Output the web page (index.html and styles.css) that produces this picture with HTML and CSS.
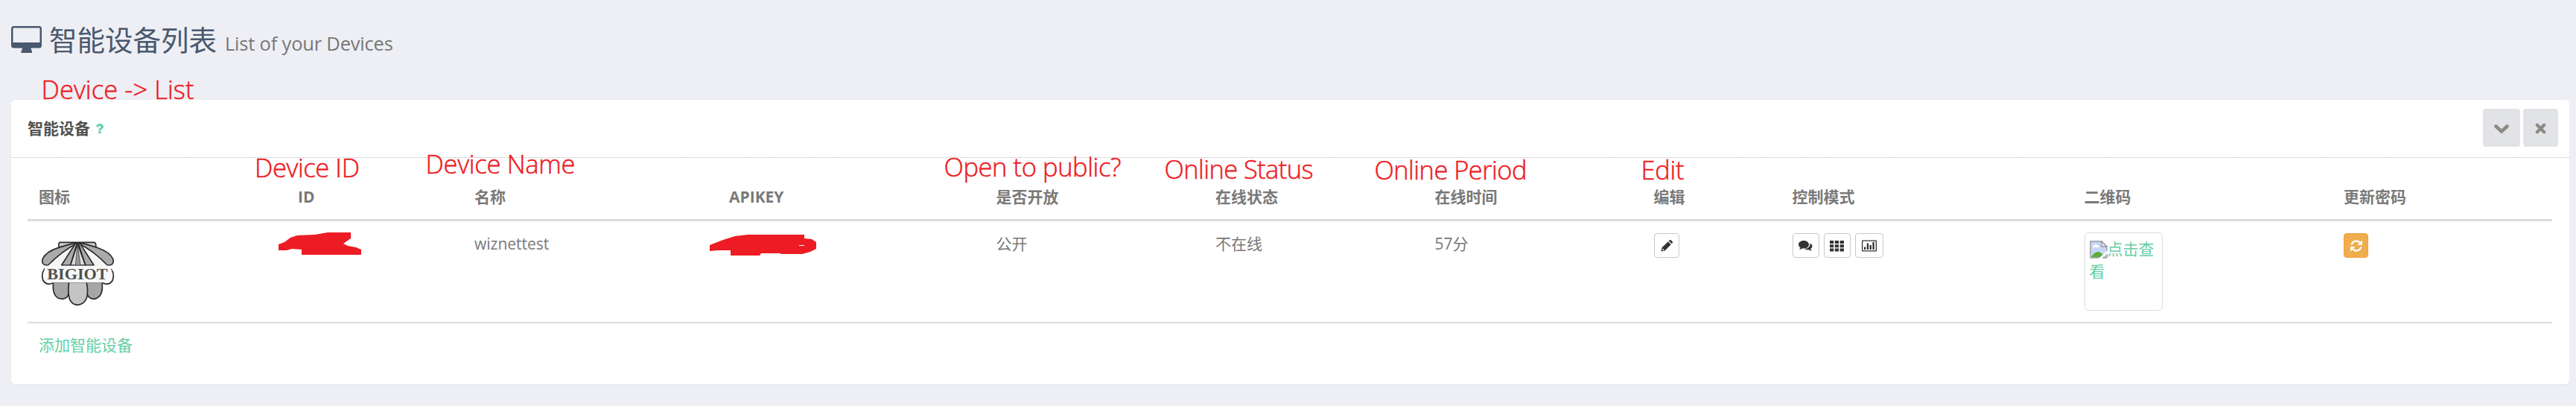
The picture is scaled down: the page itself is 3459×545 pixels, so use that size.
FILE: index.html
```html
<!DOCTYPE html>
<html lang="zh-CN">
<head>
<meta charset="utf-8">
<title>智能设备列表</title>
<link rel="stylesheet" href="styles.css">
</head>
<body>
<header class="page-title">
  <svg class="monitor" viewBox="0 0 41 36"><path fill-rule="evenodd" d="M3.500 0h34A3.500 3.500 0 0 1 41 3.500V26a3.500 3.500 0 0 1-3.500 3.500H26.500c0 2.500 1.500 3 1.500 4.500v2H13.500v-2c0-1.500 1.500-2 1.500-4.500H3.500A3.500 3.500 0 0 1 0 26V3.500A3.500 3.500 0 0 1 3.500 0zM3.500 2.500a1 1 0 0 0-1 1V22h36V3.500a1 1 0 0 0-1-1z"/></svg>
  <h1>智能设备列表</h1>
  <small>List of your Devices</small>
</header>
<section class="panel">
  <header class="panel-head">
    <h2>智能设备</h2>
    <svg class="help" viewBox="0 0 10 13"><path d="M3.300 9.800h3.200V13H3.300zM0 3.600C1 1.200 2.700 0 5 0c2.700 0 5 1.700 5 4 0 2.900-3.400 3-3.400 4.700H3.300C3.300 5.900 6.400 5.800 6.400 4.200c0-.9-.7-1.300-1.500-1.300-1.100 0-1.700.8-2.500 2.200z"/></svg>
    <div class="tools">
      <a class="tool wide"><svg viewBox="0 0 20 14"><path d="M2.500 3.500 10 10.500 17.500 3.500"/></svg></a>
      <a class="tool"><svg viewBox="0 0 16 16"><path d="M3 3 13 13M13 3 3 13"/></svg></a>
    </div>
  </header>
  <div class="table">
    <div class="row head">
      <span>图标</span><span>ID</span><span>名称</span><span>APIKEY</span><span>是否开放</span><span>在线状态</span><span>在线时间</span><span>编辑</span><span>控制模式</span><span>二维码</span><span>更新密码</span>
    </div>
    <div class="row body">
      <span><svg class="logo" viewBox="0 0 345 330">
        <g stroke="#2a2a2a" stroke-width="5" stroke-linejoin="round">
          <path fill="#ccc" d="M96 40H236Q244 42 242 60L170 44 94 60Q90 44 96 40z"/>
          <path fill="#aaa" d="M150 44 90 62Q40 78 27 108Q22 130 42 132H50Q100 80 168 42zM190 44 250 62Q298 78 312 108Q316 130 298 132H288Q240 80 170 42z"/>
          <path fill="#f4f4f4" stroke="none" d="M168 42 50 134H288z"/>
          <path fill="#aaa" d="M160 44 104 132H140L166 46zM178 44 234 132H200L172 46z"/>
          <path fill="#ddd" d="M168 44 140 132H200z"/>
          <path fill="#999" d="M168 44 160 132H180z" stroke-width="2"/>
          <path fill="#a6a6a6" d="M70 200V225Q74 268 108 268Q134 266 134 235V200zM204 200V235Q208 268 236 268Q266 262 268 225V200z"/>
          <path fill="#c4c4c4" d="M134 200Q128 240 136 268Q146 292 170 292Q196 290 206 262Q212 230 204 200z"/>
          <path fill="none" d="M38 145Q26 158 26 175Q28 208 56 208L70 203M300 145Q313 158 313 175Q311 208 284 208L268 203"/>
        </g>
        <path fill="#f8f8f8" d="M44 134H296Q308 150 308 170Q306 196 290 202H50Q34 196 31 172Q32 150 44 134z"/>
        <text x="168" y="190" text-anchor="middle" textLength="244" lengthAdjust="spacingAndGlyphs">BIGIOT</text>
      </svg></span>
      <span></span>
      <span>wiznettest</span>
      <span></span>
      <span>公开</span>
      <span>不在线</span>
      <span>57分</span>
      <span class="buttons"><a class="btn"><svg viewBox="0 0 16 16"><path fill-rule="evenodd" d="M.5 15.500 1.500 10.500 9.800 2.200 13.800 6.200 5.500 14.500zM2.500 11.500 2 13l1.200 1.200 1.500-.5zM10.800 1.400 12 .3q.8-.7 1.600 0l2.200 2.200q.6.700 0 1.500L14.700 5.300z"/></svg></a></span>
      <span class="buttons">
        <a class="btn b2"><svg viewBox="0 0 19 16"><path d="M7 1c4 0 7 2.400 7 5.300s-3 5.300-7 5.300c-.7 0-1.300-.1-2-.2-1 .8-2.300 1.300-4 1.500.8-.8 1.300-1.500 1.500-2.500C1 9.400 0 8 0 6.300 0 3.400 3 1 7 1zM15.200 4.500c2 .9 3.300 2.300 3.300 4.100 0 1.500-.9 2.700-2.300 3.600.2 1 .8 1.700 1.500 2.500-1.700-.1-3-.7-4-1.500-2 .4-4.200 0-5.700-1 4.500-.2 8.600-3.500 7.200-7.700z"/></svg></a>
        <a class="btn b2"><svg viewBox="0 0 19 16"><path d="M0 1h5.200v4H0zm6.800 0H12v4H6.800zm6.800 0H19v4h-5.400zM0 6.300h5.200v4H0zm6.800 0H12v4H6.800zm6.800 0H19v4h-5.400zM0 11.600h5.200v4H0zm6.800 0H12v4H6.800zm6.800 0H19v4h-5.400z"/></svg></a>
        <a class="btn b3"><svg viewBox="0 0 20 16"><path fill-rule="evenodd" d="M1 .5h18a1 1 0 0 1 1 1v13a1 1 0 0 1-1 1H1a1 1 0 0 1-1-1v-13a1 1 0 0 1 1-1zM1.300 1.800v12.400h17.400V1.800zM3 9.500h2.300v3.500H3zM6.800 4.500h2.300V13H6.800zM10.600 7h2.300v6h-2.300zM14.400 3h2.300v10h-2.300z"/></svg></a>
      </span>
      <span><a class="qr"><svg viewBox="0 0 24 24"><path d="M1 1h15l7 7v15H1z" fill="#c6d7f7" stroke="#999" stroke-width="1.400"/><path d="M4 8q0-2 2-2 2-3 4 0 3 0 3 3H4z" fill="#fff"/><path d="M2 22q9-14 18 0z" fill="#5aad35"/><path d="M12 24 24 13v4l-8 7z" fill="#fff"/><path d="M16 1v7h7z" fill="#eee" stroke="#999" stroke-width="1.400"/></svg>点击查看</a></span>
      <span class="buttons"><a class="btn warn"><svg viewBox="0 0 16 16"><path d="M1.800 6.500A6.300 6.300 0 0 1 13 4M14.200 9.500A6.300 6.300 0 0 1 3 12" fill="none" stroke="#fff" stroke-width="2.400"/><path d="M16 .5v6.500H9.500zM0 15.500V9h6.500z"/></svg></a></span>
    </div>
    <div class="foot"><a>添加智能设备</a></div>
  </div>
</section>
<svg class="notes" viewBox="0 0 3459 545">
  <g class="note">
    <text x="55.500" y="133" textLength="205">Device -&gt; List</text>
    <text x="342" y="238" textLength="141">Device ID</text>
    <text x="571.500" y="233" textLength="201">Device Name</text>
    <text x="1267.500" y="237" textLength="238">Open to public?</text>
    <text x="1563.500" y="239.500" textLength="200">Online Status</text>
    <text x="1845.500" y="240.500" textLength="205">Online Period</text>
    <text x="2203.500" y="240.500" textLength="58">Edit</text>
  </g>
  <path d="M374 328 382 325 390 319 399 316 423 315 440 312H471V320L461 327 467 330 478 332 485 335V342H405V335L392 334 385 336H374z"/>
  <path d="M953 329 963 325 974 321 987 317 1004 315H1080V320L1090 321 1096 325V334L1088 338 1077 341H1048V340H1022L1020 343H981V336H964L953 337z"/>
  <path class="gap" d="M1073 329h7v1h-7z"/>
</svg>
</body>
</html>
```
FILE: styles.css
```css
* { box-sizing: border-box; }
body {
  margin: 0;
  height: 545px;
  overflow: hidden;
  background: #eeeff4;
  color: #797979;
  font: 21px/30px "Open Sans", "Noto Sans CJK SC", sans-serif;
}
.page-title {
  display: flex;
  align-items: baseline;
  height: 134px;
  padding: 26px 0 0 15px;
  color: #49586e;
}
.monitor { width: 41px; height: 36px; fill: #49586e; align-self: flex-start; margin-top: 9px; }
h1 { margin: 0 0 0 10px; font-size: 37.5px; line-height: 56px; font-weight: 400; }
small { margin-left: 11px; font-size: 25.5px; color: #777; letter-spacing: -0.2px; }
.panel {
  margin: 0 9px 0 15px;
  height: 382px;
  border-radius: 6px;
  background: #fff;
  box-shadow: 0 1px 1px rgba(0, 0, 0, .06);
}
.panel-head {
  display: flex;
  align-items: center;
  height: 78px;
  padding: 0 15px 0 22px;
  border-bottom: 1px dotted #bbb;
}
h2 { margin: -1px 0 0; font-size: 21px; font-weight: 700; color: #535351; }
.help { width: 10px; height: 13px; margin-left: 8px; fill: #65cea7; }
.tools { display: flex; gap: 4px; margin-left: auto; margin-top: -2px; }
.tool {
  display: flex;
  align-items: center;
  justify-content: center;
  width: 47px;
  height: 51px;
  border-radius: 4px;
  background: #e2e3e7;
}
.tool.wide { width: 50px; }
.tool svg { width: 15px; height: 15px; fill: none; stroke: #898a83; stroke-width: 4.5; stroke-linecap: round; margin-top: 2px; }
.tool.wide svg { width: 20px; height: 14px; }
.table { margin: 0 23px 0 22px; }
.row {
  display: grid;
  grid-template-columns: 348px 237px 342px 358.5px 294.5px 294.5px 294px 186px 392px 348.5px 1fr;
  padding-left: 15px;
}
.head { height: 85px; padding-top: 37px; font-weight: 700; border-bottom: 3px solid #ddd; }
.body { height: 137px; padding-top: 15px; border-bottom: 2px solid #ddd; }
.logo { display: block; width: 115px; height: 110px; margin-left: -4px; }
.logo text { font: 700 66px "Liberation Serif", serif; fill: #505050; }
.buttons { display: flex; gap: 6px; padding-top: 1px; }
.btn {
  display: flex;
  align-items: center;
  justify-content: center;
  width: 34px;
  height: 33px;
  border: 1px solid #c8c8c8;
  border-radius: 4px;
}
.btn svg { width: 16px; height: 16px; fill: #333; }
.b2 { width: 36px; }
.b3 { width: 38px; }
.b2 svg { width: 19px; }
.b3 svg { width: 20px; }
.warn { width: 33px; background: #f0ad4e; border-color: #eea236; }
.warn svg { fill: #fff; }
.qr {
  display: block;
  width: 105px;
  height: 105px;
  padding: 6px;
  border: 1px solid #ddd;
  border-radius: 5px;
  color: #65cea7;
}
.qr svg { width: 24px; height: 24px; vertical-align: -5px; }
.foot { padding: 14px 15px; color: #65cea7; }
.notes { position: absolute; left: 0; top: 0; width: 3459px; height: 545px; fill: #ed1c24; pointer-events: none; }
.note { font: 300 34.5px "Open Sans", sans-serif; stroke: #ed1c24; stroke-width: .5px; }
.gap { fill: #fff; }
```
